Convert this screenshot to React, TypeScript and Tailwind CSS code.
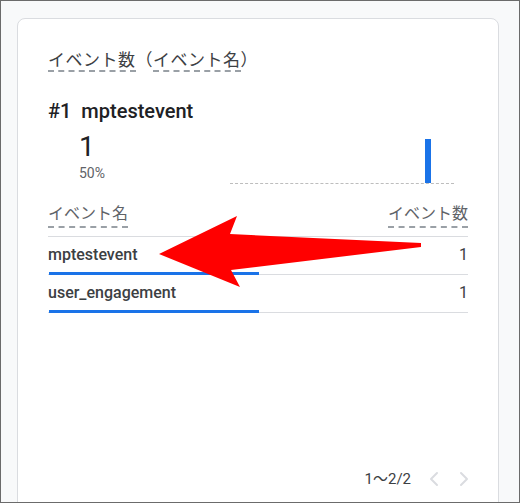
import { ChevronLeft, ChevronRight } from 'lucide-react';

type Row = {
    name: string;
    count: number;
};

const rows: Row[] = [
    { name: 'mptestevent', count: 1 },
    { name: 'user_engagement', count: 1 },
];

const font = { fontFamily: 'Roboto, "Noto Sans CJK JP", sans-serif' };

export default function App() {
    return (
        <div className="relative w-[520px] h-[503px] overflow-hidden border border-[#6b6b6b] bg-[#f8f9fa]" style={font}>
            <div className="ml-4 mt-[17px] w-[482px] h-[500px] rounded-lg border border-[#dadce0] bg-white flex flex-col px-[30px] pt-[29px]">
                {/* タイトル */}
                <div className="text-[17px] leading-6 text-[#3c4043] tracking-[0.5px]">
                    <span className="border-b-2 border-dashed border-[#9aa0a6]">イベント数</span>
                    <span>（</span>
                    <span className="border-b-2 border-dashed border-[#9aa0a6]">イベント名</span>
                    <span>）</span>
                </div>

                <div className="mt-[25px] text-[20px] leading-7 font-medium text-[#202124]">#1&nbsp; mptestevent</div>

                <div className="mt-[6px] flex items-start">
                    <div className="ml-[31px] w-[151px]">
                        <div className="text-[28px] leading-8 text-[#202124]">1</div>
                        <div className="mt-[1px] text-[14px] leading-[18px] text-[#5f6368]">50%</div>
                    </div>
                    <div className="w-[224px] h-[53px] border-b border-dashed border-[#bdbdbd] relative">
                        <div className="absolute left-[195px] bottom-0 w-[6px] h-[44px] bg-[#1a73e8]" />
                    </div>
                </div>

                {/* テーブル */}
                <div className="mt-[19px] flex justify-between text-[16px] leading-[22px] text-[#5f6368]">
                    <span className="border-b-2 border-dashed border-[#9aa0a6] pb-[1px]">イベント名</span>
                    <span className="border-b-2 border-dashed border-[#9aa0a6] pb-[1px]">イベント数</span>
                </div>
                <div className="mt-[8px] border-t border-[#dadce0]">
                    {rows.map((row) => (
                        <div key={row.name} className="relative h-[38px] border-b border-[#dadce0] flex items-center justify-between text-[16px] text-[#3c4043] pb-[2px]">
                            <span className="font-medium">{row.name}</span>
                            <span>{row.count}</span>
                            <div className="absolute left-[1px] bottom-[-1px] w-[210px] h-[3px] bg-[#1a73e8]" />
                        </div>
                    ))}
                </div>

                <div className="mt-auto mb-[26px] -mr-[8px] h-[24px] flex items-center justify-end text-[15px] text-[#3c4043]">
                    <span className="mr-[11px]">1～2/2</span>
                    <ChevronLeft className="w-6 h-6 text-[#dadce0]" strokeWidth={2} />
                    <ChevronRight className="ml-[6px] w-6 h-6 text-[#dadce0]" strokeWidth={2} />
                </div>
            </div>

            {/* 赤い矢印 */}
            <svg className="absolute -left-px -top-px" width="520" height="503" viewBox="0 0 520 503">
                <polygon points="159,254 237,216 230,234 421,243 421,247 231,270 240,287" fill="#ff0000" />
            </svg>
        </div>
    );
}
